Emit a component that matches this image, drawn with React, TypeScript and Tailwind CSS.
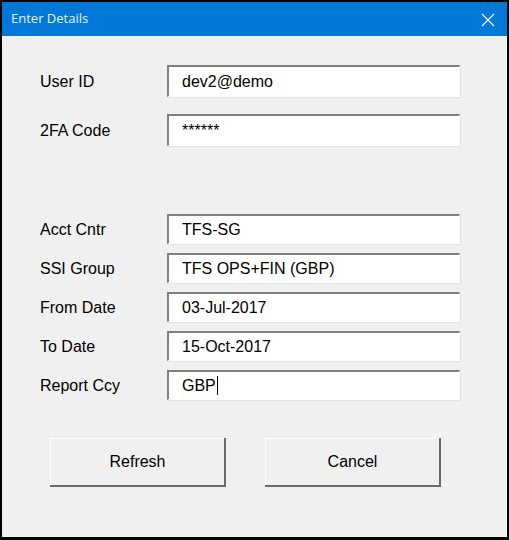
import React from "react";

const Field = ({ label, value, caret, tall }: { label: string; value: string; caret?: boolean; tall?: boolean }) => (
  <div className={`flex items-center ${tall ? "h-[33px]" : "h-[31px]"}`}>
    <div className="w-[127px] text-[16px] text-black">{label}</div>
    <div className="h-full w-[294px] border-r border-b border-[#e3e3e3]">
      <div className="flex h-full items-center border-t-2 border-l-2 border-r border-b border-t-[#7f7f7f] border-l-[#7f7f7f] border-r-white border-b-white bg-white pl-[13px] text-[16px] text-black">
        <span>{value}</span>
        {caret && <span className="ml-[1px] inline-block h-[19px] w-px bg-black" />}
      </div>
    </div>
  </div>
);

const WinButton = ({ children }: { children: React.ReactNode }) => (
  <div className="h-[49px] w-[176px] border-r-2 border-b-2 border-[#6a6a6a]">
    <div className="flex h-full items-center justify-center border-t border-l border-white bg-[#f0f0f0] text-[16px] text-black">
      {children}
    </div>
  </div>
);

export default function App() {
  return (
    <div className="h-[540px] w-[509px] border-t-2 border-l-2 border-r-2 border-b-3 border-black bg-[#f0f0f0] font-['Liberation_Sans',Arial,sans-serif]">
      <div className="flex h-[34px] items-center justify-between bg-[#0078d7] pl-[9px] pr-[12px]">
        <span className="font-['Open_Sans','Noto_Sans',sans-serif] text-[13px] text-[#eaf3fc]">Enter Details</span>
        <svg width="14" height="14" viewBox="0 0 14 14" className="mt-[1px]">
          <path d="M1 1 L13 13 M13 1 L1 13" stroke="#ffffff" strokeWidth="1.1" />
        </svg>
      </div>
      <div className="flex h-[501px] flex-col border-r border-[#fafafa] pl-[38px] pt-[29px]">
        <div className="flex flex-col gap-[16px]">
          <Field label="User ID" value="dev2@demo" tall />
          <Field label="2FA Code" value="******" tall />
        </div>
        <div className="mt-[67px] flex flex-col gap-[8px]">
          <Field label="Acct Cntr" value="TFS-SG" />
          <Field label="SSI Group" value="TFS OPS+FIN (GBP)" />
          <Field label="From Date" value="03-Jul-2017" />
          <Field label="To Date" value="15-Oct-2017" />
          <Field label="Report Ccy" value="GBP" caret />
        </div>
        <div className="mt-[37px] flex gap-[39px] pl-[10px]">
          <WinButton>Refresh</WinButton>
          <WinButton>Cancel</WinButton>
        </div>
      </div>
    </div>
  );
}
